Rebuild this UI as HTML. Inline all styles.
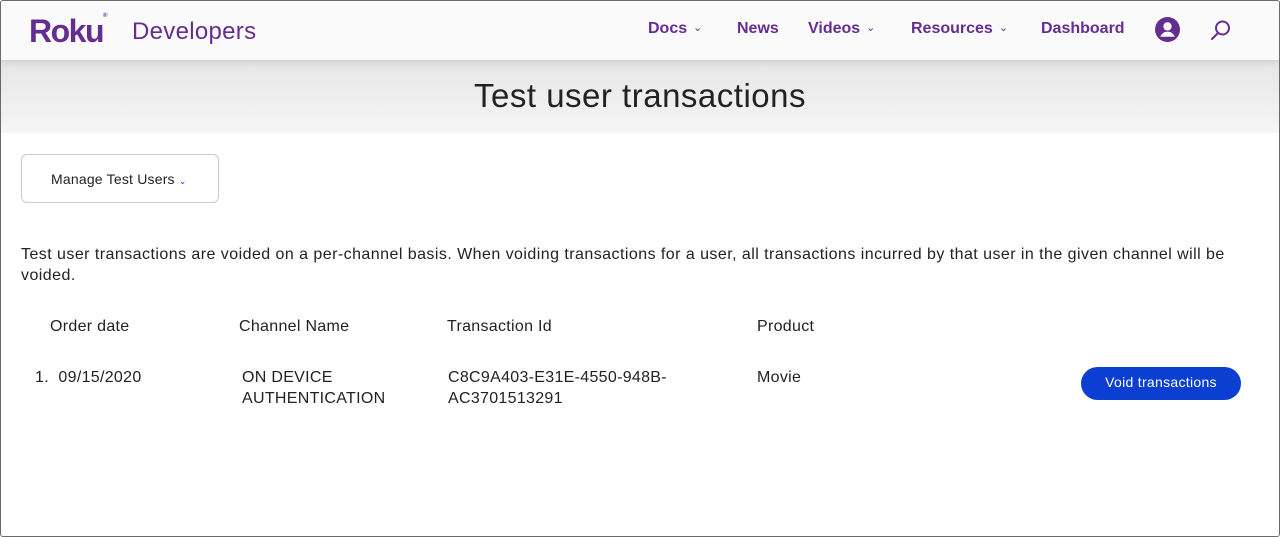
<!DOCTYPE html>
<html><head><style>
*{margin:0;padding:0;box-sizing:border-box}
body{width:1280px;height:537px;overflow:hidden;background:#fff;font-family:"Liberation Sans",sans-serif;color:#222;position:relative}
.frame{position:absolute;inset:0;border:1px solid #6a6a6a;border-radius:3px;pointer-events:none;z-index:5}
.hdr{position:absolute;left:0;top:0;width:1280px;height:60px;background:#fafafa;box-shadow:0 2px 8px rgba(0,0,0,.12);z-index:2}
.logo{position:absolute;left:29px;top:13px;font-size:32px;font-weight:bold;color:#662d91;letter-spacing:-1.5px}
.dev{position:absolute;left:132px;top:18px;font-size:24px;color:#662d91;letter-spacing:0.3px}
.nav{position:absolute;top:20px;font-size:16px;font-weight:bold;color:#662d91}
.car{font-weight:normal;font-size:11px;margin-left:6px;position:relative;top:-2px}
.band{position:absolute;top:60px;left:0;width:1280px;height:73px;background:linear-gradient(#e6e6e6,#f5f5f5)}
.band h1{font-weight:normal;font-size:33px;color:#222;text-align:center;margin-top:17px;letter-spacing:0.5px}
.btn{position:absolute;left:21px;top:154px;width:198px;height:49px;border:1px solid #ccc;border-radius:6px;font-size:14px;padding:16px 0 0 29px;letter-spacing:0.2px}
.p{position:absolute;left:21px;top:244px;width:1245px;font-size:16px;line-height:21px;letter-spacing:0.45px}
.t{position:absolute;font-size:16px;line-height:21px;letter-spacing:0.3px}
.vb{position:absolute;left:1081px;top:367px;width:160px;height:33px;background:#0a3fd1;color:#fff;border-radius:17px;font-size:14px;text-align:center;line-height:31px;letter-spacing:0.3px}
</style></head><body>
<div class="frame"></div>
<div class="hdr">
<div class="logo">Roku<span style="font-size:6px;vertical-align:top">®</span></div>
<div class="dev">Developers</div>
<div class="nav" style="left:648px">Docs<span class="car">&#8964;</span></div>
<div class="nav" style="left:737px">News</div>
<div class="nav" style="left:808px">Videos<span class="car">&#8964;</span></div>
<div class="nav" style="left:911px">Resources<span class="car">&#8964;</span></div>
<div class="nav" style="left:1041px">Dashboard</div>
<svg style="position:absolute;left:1155px;top:17px" width="25" height="25" viewBox="0 0 24 24"><circle cx="12" cy="12" r="12" fill="#662d91"/><circle cx="12" cy="9" r="4" fill="#fafafa"/><path d="M5 19c1.5-3.5 4-5 7-5s5.5 1.5 7 5" fill="#fafafa"/></svg>
<svg style="position:absolute;left:1210px;top:19px" width="22" height="22" viewBox="0 0 22 22"><circle cx="12.5" cy="9" r="6.5" fill="none" stroke="#662d91" stroke-width="2"/><path d="M8 14L2 20" stroke="#662d91" stroke-width="2" stroke-linecap="round"/></svg>
</div>
<div class="band"><h1>Test user transactions</h1></div>
<div class="btn">Manage Test Users <span style="color:#0a3fd1;font-size:9px">&#8964;</span></div>
<div class="p">Test user transactions are voided on a per-channel basis. When voiding transactions for a user, all transactions incurred by that user in the given channel will be voided.</div>
<div class="t" style="left:50px;top:316px">Order date</div>
<div class="t" style="left:239px;top:316px">Channel Name</div>
<div class="t" style="left:447px;top:316px">Transaction Id</div>
<div class="t" style="left:757px;top:316px">Product</div>
<div class="t" style="left:35px;top:367px">1.&nbsp; 09/15/2020</div>
<div class="t" style="left:242px;top:367px">ON DEVICE<br>AUTHENTICATION</div>
<div class="t" style="left:448px;top:367px">C8C9A403-E31E-4550-948B-<br>AC3701513291</div>
<div class="t" style="left:757px;top:367px">Movie</div>
<div class="vb">Void transactions</div>
</body></html>
